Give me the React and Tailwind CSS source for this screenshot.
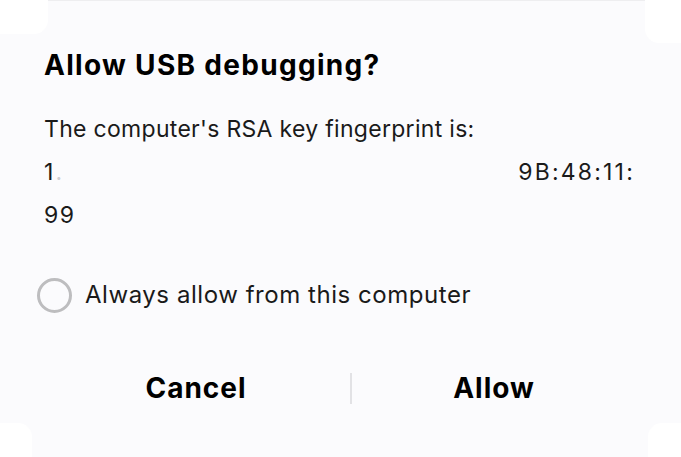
import React from "react";

export default function App() {
  const font = { fontFamily: "Inter, 'Noto Sans', sans-serif" };
  return (
    <div className="w-[681px] h-[457px] bg-[#fbfbfd] flex flex-col overflow-hidden text-[#111]" style={font}>
      <div className="h-[43px] flex items-start justify-between shrink-0">
        <div className="w-[48px] h-[34px] bg-white rounded-br-[14px]" />
        <div className="flex-1 h-px bg-[#eeeef0]" />
        <div className="w-[36px] h-[43px] bg-white rounded-bl-[14px]" />
      </div>
      <div className="flex-1 flex flex-col pl-[44px] pr-[48px]">
        <h1 className="mt-[5px] text-[28px] leading-[34px] font-bold text-black tracking-[1.3px]">Allow USB debugging?</h1>
        <div className="mt-[26px] text-[23px] leading-[43px] text-[#1a1a1a] tracking-[0.3px]">
          <p>The computer's RSA key fingerprint is:</p>
          <p className="flex justify-between tracking-[2.2px]">
            <span>1<span className="text-[#cfcfd2]">.</span></span>
            <span className="-mr-[2px]">9B:48:11:</span>
          </p>
          <p className="tracking-[1.5px]">99</p>
        </div>
        <label className="mt-[40px] -ml-[7px] flex items-center gap-[13px] text-[24px] text-[#1a1a1a] tracking-[0.55px]">
          <span className="w-[35px] h-[35px] rounded-full border-[3px] border-[#bdbdbf] shrink-0" />
          <span>Always allow from this computer</span>
        </label>
        <div className="mt-[54px] -ml-[44px] -mr-[48px] flex items-center">
          <button className="w-[350px] shrink-0 text-center text-[28px] font-bold text-black tracking-[1px] pl-[42px]">Cancel</button>
          <span className="w-[2px] h-[31px] bg-[#e2e2e5] shrink-0" />
          <button className="flex-1 text-center text-[28px] font-bold text-black tracking-[1px] pr-[45px]">Allow</button>
        </div>
      </div>
      <div className="h-[34px] flex items-end justify-between shrink-0">
        <div className="w-[32px] h-[34px] bg-white rounded-tr-[14px]" />
        <div className="w-[33px] h-[34px] bg-white rounded-tl-[14px]" />
      </div>
    </div>
  );
}
